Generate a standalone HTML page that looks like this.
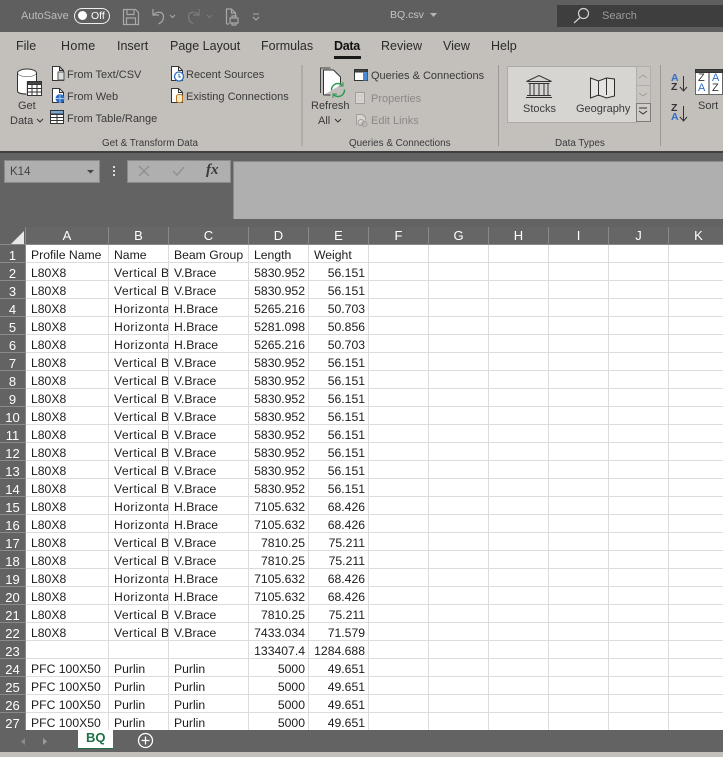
<!DOCTYPE html>
<html><head><meta charset="utf-8">
<style>
html,body{margin:0;padding:0;width:723px;height:757px;overflow:hidden;background:#636363;font-family:"Liberation Sans",sans-serif}
.t{position:absolute;white-space:nowrap;font-size:11px;line-height:14px;color:#3a3a3a}
.m{font-size:12.500px;color:#2a2a2a;top:39px}
.l{font-size:9.900px;top:137px}
.g{color:#8b8986}
.b{position:absolute}
svg{position:absolute;overflow:visible}
table{position:absolute;left:0;top:227px;border-collapse:separate;border-spacing:0;table-layout:fixed;width:729px;font-size:12.200px;color:#1c1c1c}
td,th{padding:4px 0 0;height:13px;line-height:13px;overflow:hidden;white-space:nowrap;box-sizing:content-box}
th{font-weight:normal;background:#636363;color:#fff;text-align:center;border-right:1px solid #8a8a8a;border-bottom:1px solid #8a8a8a}
td{background:#fff;border-right:1px solid #dcdcdc;border-bottom:1px solid #dcdcdc;padding:4px 0 0 5px}
td.r{text-align:right;padding:4px 3px 0 0}
td.v{letter-spacing:.4px}
th.n{font-size:13px}
tr.h th{color:#fff;font-size:13px;background:#666;padding:0;height:17px;line-height:17px}
</style></head><body>
<div class="b" style="left:0;top:0;width:723px;height:32px;background:#5f5f5f"></div>
<div class="b" style="left:557px;top:5px;width:166px;height:22px;background:#3e3e3e"></div>
<div class="t" style="left:21px;top:9px;color:#bdbdbd">AutoSave</div>
<div class="b" style="left:74px;top:8px;width:34px;height:14px;border:1px solid #eee;border-radius:8px"></div>
<div class="b" style="left:78px;top:11px;width:9px;height:9px;background:#fff;border-radius:50%"></div>
<div class="t" style="left:91px;top:9px;color:#fff;font-size:10.500px">Off</div>
<svg style="left:0;top:0" width="300" height="32" fill="none" stroke="#a8a8a8" stroke-width="1.200">
<path d="M123.500 9.500h12l3 3v12h-15zM127 9.500v5h7v-5M126.500 24v-6h9v6"/>
<path d="M153 9v6h6M153.500 15c3-4 10-4 10 2 0 4-3 6-5 7"/>
<path d="M170 15l2.500 2.500 2.500-2.500" stroke-width="1"/>
<path d="M199 9v6h-6M198.500 15c-3-4-10-4-10 2 0 4 3 6 5 7" stroke="#7d7d7d"/>
<path d="M207 15l2.500 2.500 2.500-2.500" stroke="#7d7d7d" stroke-width="1"/>
<path d="M226.500 24v-15h5l4 4v4M231.500 9v4h4M229 24h-2.500M230 18h8v5h-8zM232 18v-2h4v2M232 23v2h4v-2"/>
<path d="M253 14h6M253 17l3 3 3-3" stroke-width="1.100"/>
</svg>
<div class="t" style="left:390px;top:8px;color:#c4c4c4;font-size:10.500px">BQ.csv</div>
<svg style="left:430px;top:13px" width="8" height="5"><path d="M0 0h7l-3.500 4z" fill="#b5b5b5"/></svg>
<svg style="left:572px;top:7px" width="20" height="18" fill="none" stroke="#d0d0d0" stroke-width="1.200"><circle cx="11.500" cy="6.500" r="5"/><path d="M8 10.500L2 16"/></svg>
<div class="t" style="left:602px;top:9px;color:#9b9b9b">Search</div>

<div class="b" style="left:0;top:32px;width:723px;height:119px;background:#c3bfbb"></div>
<div class="b" style="left:0;top:151px;width:723px;height:2px;background:#3f3f3f"></div>
<div class="t m" style="left:16px">File</div>
<div class="t m" style="left:61px;letter-spacing:.3px">Home</div>
<div class="t m" style="left:117px">Insert</div>
<div class="t m" style="left:170px">Page Layout</div>
<div class="t m" style="left:261px">Formulas</div>
<div class="t m" style="left:334px;color:#111;font-weight:bold;letter-spacing:-.3px">Data</div>
<div class="b" style="left:334px;top:56px;width:27px;height:3px;background:#1a1a1a"></div>
<div class="t m" style="left:381px">Review</div>
<div class="t m" style="left:443px">View</div>
<div class="t m" style="left:491px">Help</div>

<svg style="left:0;top:0" width="723" height="151" fill="none" stroke="#333" stroke-width="1">
<ellipse cx="27" cy="73" rx="9.500" ry="4" fill="#fff"/>
<path d="M17.500 73v18c0 2 4 3 9 3v-13h10v-8c0 2-4 4-9.500 4s-9.500-2-9.500-4z" fill="#fff" stroke="none"/>
<path d="M17.500 73v18c0 2 4 3 9 3M36.500 73v8"/>
<rect x="27.500" y="81.500" width="14" height="14" fill="#fff"/><path d="M27.500 81.500h14v3h-14z" fill="#444"/><path d="M27.500 88.500h14M27.500 92h14M32 84v11M37 84v11"/>
<path d="M52.500 80.500v-14h7l4 4v10h-11zM59.500 66.500v4h4" fill="#fff"/><rect x="58" y="72" width="6" height="8" fill="#ddd" stroke="#555"/>
<path d="M52.500 102.500v-14h7l4 4v10z" fill="#fff"/><path d="M59.500 88.500v4h4"/><circle cx="60" cy="98.500" r="4.500" fill="#2a6fc4" stroke="none"/><path d="M55.500 98.500h9M60 94v9" stroke="#cfe0f5" stroke-width=".7"/>
<rect x="50.500" y="110.500" width="13" height="13" fill="#fff"/><path d="M50.500 110.500h13v3.500h-13z" fill="#7aa7d8"/><path d="M50.500 114.500h13M50.500 117.500h13M50.500 120.500h13M57 114.500v9"/>
<path d="M171.500 80.500v-14h7l4 4v10z" fill="#fff"/><path d="M178.500 66.500v4h4"/><circle cx="179" cy="76.500" r="4.500" fill="#fff" stroke="#2a6fc4" stroke-width="1.300"/><path d="M179 74v3h2" stroke="#2a6fc4"/>
<path d="M171.500 102.500v-14h7l4 4v10z" fill="#fff"/><path d="M178.500 88.500v4h4"/><rect x="176.500" y="94.500" width="6" height="8" rx="2" fill="#f2e7c9" stroke="#b87a1d"/>
<path d="M302 65v81M498.500 65v81M660.500 65v81" stroke="#9b9895" stroke-width="1"/>
<path d="M320.500 93V68h10" stroke="#444"/><path d="M323.500 95V70h10l7 7v8" fill="#fff" stroke="#333"/><path d="M323.500 95h7" stroke="#333"/>
<circle cx="338" cy="90" r="6.500" fill="none" stroke="#2c9a55" stroke-width="1.500" stroke-dasharray="15 5"/>
<path d="M343 82v4h-4M333 98v-4h4" stroke="#2c9a55"/>
<rect x="354.500" y="69.500" width="13" height="11" fill="#fff"/><path d="M354.500 69.500h13v2.500h-13z" fill="#444"/><rect x="363" y="72" width="4.500" height="8.500" fill="#4a8bd6" stroke="none"/>
<rect x="355.500" y="92.500" width="9" height="11" fill="#d8d5d1" stroke="#a09e9a"/><path d="M358 96h1M361 96h1M358 100h1M361 100h1" stroke="#a09e9a"/>
<path d="M356.500 125.500v-11h6l3 3v3" stroke="#a09e9a" fill="#d8d5d1"/><circle cx="361" cy="122.500" r="3" stroke="#a09e9a"/><circle cx="364.500" cy="124" r="2.500" stroke="#a09e9a"/>
</svg>
<div class="t" style="left:18px;top:99px">Get</div>
<div class="t" style="left:10px;top:114px">Data</div>
<svg style="left:36px;top:118px" width="8" height="5" fill="none" stroke="#333"><path d="M1 1l3 3 3-3"/></svg>
<div class="t" style="left:67px;top:68px">From Text/CSV</div>
<div class="t" style="left:67px;top:90px">From Web</div>
<div class="t" style="left:67px;top:112px">From Table/Range</div>
<div class="t" style="left:186px;top:68px">Recent Sources</div>
<div class="t" style="left:186px;top:90px">Existing Connections</div>
<div class="t l" style="left:102px">Get &amp; Transform Data</div>
<div class="t" style="left:311px;top:99px">Refresh</div>
<div class="t" style="left:318px;top:114px">All</div>
<svg style="left:334px;top:118px" width="8" height="5" fill="none" stroke="#333"><path d="M1 1l3 3 3-3"/></svg>
<div class="t" style="left:371px;top:69px">Queries &amp; Connections</div>
<div class="t g" style="left:371px;top:92px">Properties</div>
<div class="t g" style="left:371px;top:114px">Edit Links</div>
<div class="t l" style="left:349px">Queries &amp; Connections</div>

<div class="b" style="left:507px;top:66px;width:128px;height:55px;background:#d7d5d2;border:1px solid #adaaa7"></div>
<div class="b" style="left:636px;top:66px;width:13px;height:18px;background:#c9c6c2;border:1px solid #b1aeab"></div>
<div class="b" style="left:636px;top:85px;width:13px;height:17px;background:#c9c6c2;border:1px solid #b1aeab"></div>
<div class="b" style="left:636px;top:103px;width:13px;height:17px;background:#d0cdc9;border:1px solid #7f7d7a"></div>
<svg style="left:0;top:0" width="723" height="151" fill="none" stroke="#333" stroke-width="1">
<path d="M639 78l4-3 4 3M639 93l4 3 4-3" stroke="#a09d9a"/><path d="M639 108h8"/><path d="M639 111l4 3 4-3"/>
<path d="M526.500 81.500l12.500-6 12.500 6zM528.500 83.500h21M530 84v11M534 84v11M539 84v11M544 84v11M548 84v11M527 95.500h24M526 97.500h26"/>
<path d="M590.500 78l8 3 8-3 8 1v17l-8 2-8-3-8 3z" fill="#e6e4e1" stroke="#2c2c2c"/><path d="M598.500 81v15M606.500 78v17"/>
</svg>
<div class="t" style="left:523px;top:102px">Stocks</div>
<div class="t" style="left:576px;top:102px">Geography</div>
<div class="t l" style="left:555px">Data Types</div>

<div class="t" style="left:671px;top:74px;font-size:10.500px;line-height:9px;font-weight:bold;color:#2f6fc7">A<br><span style="color:#333">Z</span></div>
<svg style="left:0;top:0" width="723" height="151" fill="none" stroke="#333"><path d="M683.500 76v14M680 87l3.500 4 3.500-4M683.500 106v14M680 117l3.500 4 3.500-4"/>
<rect x="695.500" y="69.500" width="27" height="25" fill="#fff" stroke="#666"/><path d="M695.500 69.500h27v3h-27z" fill="#444"/><path d="M709 72v22"/></svg>
<div class="t" style="left:671px;top:104px;font-size:10.500px;line-height:9px;font-weight:bold;color:#333">Z<br><span style="color:#2f6fc7">A</span></div>
<div class="t" style="left:698px;top:73px;font-size:11px;line-height:10px;color:#333">Z<br><span style="color:#2f6fc7">A</span></div>
<div class="t" style="left:712px;top:73px;font-size:11px;line-height:10px;color:#2f6fc7">A<br><span style="color:#333">Z</span></div>
<div class="t" style="left:698px;top:99px">Sort</div>

<div class="b" style="left:4px;top:160px;width:94px;height:21px;background:#afafaf;border:1px solid #8a8a8a"></div>
<div class="t" style="left:10px;top:165px;color:#444;font-size:11.500px">K14</div>
<svg style="left:87px;top:170px" width="7" height="4"><path d="M0 0h7l-3.500 3.500z" fill="#444"/></svg>
<div class="b" style="left:113px;top:166px;width:2px;height:2px;background:#ddd;box-shadow:0 4px 0 #ddd,0 8px 0 #ddd"></div>
<div class="b" style="left:127px;top:160px;width:102px;height:21px;background:#afafaf;border:1px solid #8a8a8a"></div>
<svg style="left:0;top:0" width="230" height="190" fill="none" stroke="#8d8d8d" stroke-width="1.300"><path d="M139 166l10 10M149 166l-10 10M173 171l4 4 7-8"/></svg>
<div class="t" style="left:206px;top:163px;font-family:'Liberation Serif',serif;font-style:italic;font-weight:bold;font-size:15px;color:#3a3a3a">fx</div>
<div class="b" style="left:233px;top:161px;width:490px;height:57px;background:#afafaf;border-left:1px solid #8a8a8a;border-top:1px solid #8a8a8a"></div>
<svg style="left:11px;top:231px" width="14" height="13"><path d="M13 0v13H0z" fill="#e8e8e8"/></svg>

<table>
<colgroup><col style="width:26px"><col style="width:83px"><col style="width:60px"><col style="width:80px"><col style="width:60px"><col style="width:60px"><col style="width:60px"><col style="width:60px"><col style="width:60px"><col style="width:60px"><col style="width:60px"><col style="width:60px"></colgroup>
<tr class="h"><th style="background:transparent"></th><th>A</th><th>B</th><th>C</th><th>D</th><th>E</th><th>F</th><th>G</th><th>H</th><th>I</th><th>J</th><th>K</th></tr>
<tr><th class="n">1</th><td>Profile Name</td><td>Name</td><td>Beam Group</td><td>Length</td><td>Weight</td><td></td><td></td><td></td><td></td><td></td><td></td></tr>
<tr><th class="n">2</th><td>L80X8</td><td class="v">Vertical Brace</td><td>V.Brace</td><td class="r">5830.952</td><td class="r">56.151</td><td></td><td></td><td></td><td></td><td></td><td></td></tr>
<tr><th class="n">3</th><td>L80X8</td><td class="v">Vertical Brace</td><td>V.Brace</td><td class="r">5830.952</td><td class="r">56.151</td><td></td><td></td><td></td><td></td><td></td><td></td></tr>
<tr><th class="n">4</th><td>L80X8</td><td class="v">Horizontal Brace</td><td>H.Brace</td><td class="r">5265.216</td><td class="r">50.703</td><td></td><td></td><td></td><td></td><td></td><td></td></tr>
<tr><th class="n">5</th><td>L80X8</td><td class="v">Horizontal Brace</td><td>H.Brace</td><td class="r">5281.098</td><td class="r">50.856</td><td></td><td></td><td></td><td></td><td></td><td></td></tr>
<tr><th class="n">6</th><td>L80X8</td><td class="v">Horizontal Brace</td><td>H.Brace</td><td class="r">5265.216</td><td class="r">50.703</td><td></td><td></td><td></td><td></td><td></td><td></td></tr>
<tr><th class="n">7</th><td>L80X8</td><td class="v">Vertical Brace</td><td>V.Brace</td><td class="r">5830.952</td><td class="r">56.151</td><td></td><td></td><td></td><td></td><td></td><td></td></tr>
<tr><th class="n">8</th><td>L80X8</td><td class="v">Vertical Brace</td><td>V.Brace</td><td class="r">5830.952</td><td class="r">56.151</td><td></td><td></td><td></td><td></td><td></td><td></td></tr>
<tr><th class="n">9</th><td>L80X8</td><td class="v">Vertical Brace</td><td>V.Brace</td><td class="r">5830.952</td><td class="r">56.151</td><td></td><td></td><td></td><td></td><td></td><td></td></tr>
<tr><th class="n">10</th><td>L80X8</td><td class="v">Vertical Brace</td><td>V.Brace</td><td class="r">5830.952</td><td class="r">56.151</td><td></td><td></td><td></td><td></td><td></td><td></td></tr>
<tr><th class="n">11</th><td>L80X8</td><td class="v">Vertical Brace</td><td>V.Brace</td><td class="r">5830.952</td><td class="r">56.151</td><td></td><td></td><td></td><td></td><td></td><td></td></tr>
<tr><th class="n">12</th><td>L80X8</td><td class="v">Vertical Brace</td><td>V.Brace</td><td class="r">5830.952</td><td class="r">56.151</td><td></td><td></td><td></td><td></td><td></td><td></td></tr>
<tr><th class="n">13</th><td>L80X8</td><td class="v">Vertical Brace</td><td>V.Brace</td><td class="r">5830.952</td><td class="r">56.151</td><td></td><td></td><td></td><td></td><td></td><td></td></tr>
<tr><th class="n">14</th><td>L80X8</td><td class="v">Vertical Brace</td><td>V.Brace</td><td class="r">5830.952</td><td class="r">56.151</td><td></td><td></td><td></td><td></td><td></td><td></td></tr>
<tr><th class="n">15</th><td>L80X8</td><td class="v">Horizontal Brace</td><td>H.Brace</td><td class="r">7105.632</td><td class="r">68.426</td><td></td><td></td><td></td><td></td><td></td><td></td></tr>
<tr><th class="n">16</th><td>L80X8</td><td class="v">Horizontal Brace</td><td>H.Brace</td><td class="r">7105.632</td><td class="r">68.426</td><td></td><td></td><td></td><td></td><td></td><td></td></tr>
<tr><th class="n">17</th><td>L80X8</td><td class="v">Vertical Brace</td><td>V.Brace</td><td class="r">7810.25</td><td class="r">75.211</td><td></td><td></td><td></td><td></td><td></td><td></td></tr>
<tr><th class="n">18</th><td>L80X8</td><td class="v">Vertical Brace</td><td>V.Brace</td><td class="r">7810.25</td><td class="r">75.211</td><td></td><td></td><td></td><td></td><td></td><td></td></tr>
<tr><th class="n">19</th><td>L80X8</td><td class="v">Horizontal Brace</td><td>H.Brace</td><td class="r">7105.632</td><td class="r">68.426</td><td></td><td></td><td></td><td></td><td></td><td></td></tr>
<tr><th class="n">20</th><td>L80X8</td><td class="v">Horizontal Brace</td><td>H.Brace</td><td class="r">7105.632</td><td class="r">68.426</td><td></td><td></td><td></td><td></td><td></td><td></td></tr>
<tr><th class="n">21</th><td>L80X8</td><td class="v">Vertical Brace</td><td>V.Brace</td><td class="r">7810.25</td><td class="r">75.211</td><td></td><td></td><td></td><td></td><td></td><td></td></tr>
<tr><th class="n">22</th><td>L80X8</td><td class="v">Vertical Brace</td><td>V.Brace</td><td class="r">7433.034</td><td class="r">71.579</td><td></td><td></td><td></td><td></td><td></td><td></td></tr>
<tr><th class="n">23</th><td></td><td></td><td></td><td class="r">133407.4</td><td class="r">1284.688</td><td></td><td></td><td></td><td></td><td></td><td></td></tr>
<tr><th class="n">24</th><td>PFC 100X50</td><td>Purlin</td><td>Purlin</td><td class="r">5000</td><td class="r">49.651</td><td></td><td></td><td></td><td></td><td></td><td></td></tr>
<tr><th class="n">25</th><td>PFC 100X50</td><td>Purlin</td><td>Purlin</td><td class="r">5000</td><td class="r">49.651</td><td></td><td></td><td></td><td></td><td></td><td></td></tr>
<tr><th class="n">26</th><td>PFC 100X50</td><td>Purlin</td><td>Purlin</td><td class="r">5000</td><td class="r">49.651</td><td></td><td></td><td></td><td></td><td></td><td></td></tr>
<tr><th class="n">27</th><td>PFC 100X50</td><td>Purlin</td><td>Purlin</td><td class="r">5000</td><td class="r">49.651</td><td></td><td></td><td></td><td></td><td></td><td></td></tr>
</table>

<div class="b" style="left:0;top:730px;width:723px;height:22px;background:#636363"></div>
<div class="b" style="left:0;top:752px;width:723px;height:5px;background:#c3bfbb"></div>
<svg style="left:20px;top:737px" width="30" height="9"><path d="M5 1v7L1 4.500z" fill="#8a8a8a"/><path d="M23 1v7l4-3.500z" fill="#9a9a9a"/></svg>
<div class="b" style="left:78px;top:730px;width:35px;height:18px;background:#fff;border-bottom:1px solid #1e7145"></div>
<div class="t" style="left:86px;top:731px;color:#1e7145;font-weight:bold;font-size:13px">BQ</div>
<svg style="left:137px;top:732px" width="17" height="17" fill="none" stroke="#fff" stroke-width="1.300"><circle cx="8.500" cy="8.500" r="7"/><path d="M8.500 4.500v8M4.500 8.500h8"/></svg>
</body></html>
